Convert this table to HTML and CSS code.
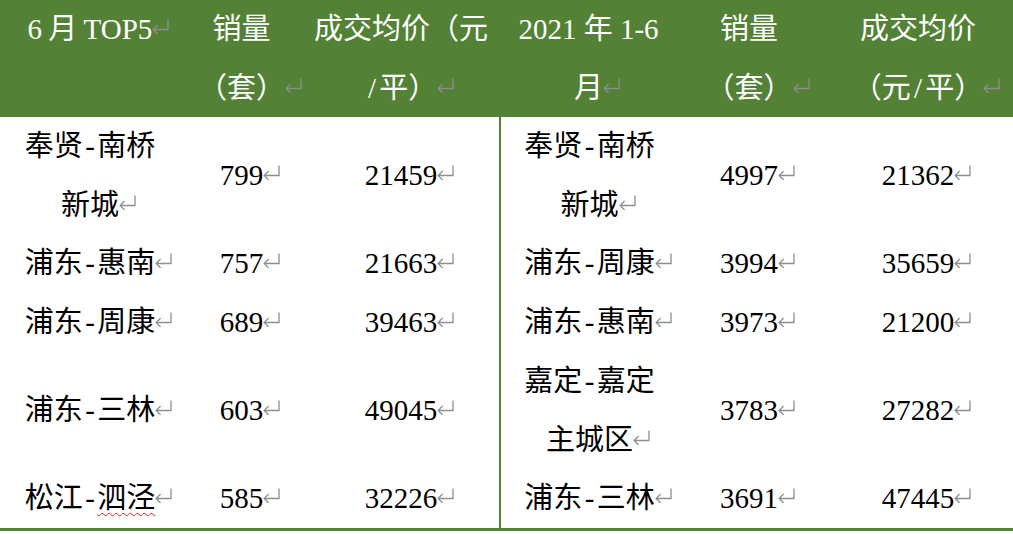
FILE: index.html
```html
<!DOCTYPE html>
<html lang="zh-CN">
<head>
<meta charset="utf-8">
<title>6月 TOP5</title>
<link rel="stylesheet" href="styles.css">
</head>
<body>
<div class="sheet">
  <div class="table">
    <div class="cell head"><p><span class="tight">6 月 TOP5</span><i class="ret"><svg viewBox="0 0 17 15" width="17" height="15"><path d="M16 0.5V10.5H1.2M5.6 6L1.2 10.5L5.6 15"/></svg></i></p></div>
    <div class="cell head"><p>销量<br>（套）<i class="ret"><svg viewBox="0 0 17 15" width="17" height="15"><path d="M16 0.5V10.5H1.2M5.6 6L1.2 10.5L5.6 15"/></svg></i></p></div>
    <div class="cell head"><p>成交均价（元<br><span class="half">/</span>平）<i class="ret"><svg viewBox="0 0 17 15" width="17" height="15"><path d="M16 0.5V10.5H1.2M5.6 6L1.2 10.5L5.6 15"/></svg></i></p></div>
    <div class="cell head"><p>2021 年 1-6<br>月<i class="ret"><svg viewBox="0 0 17 15" width="17" height="15"><path d="M16 0.5V10.5H1.2M5.6 6L1.2 10.5L5.6 15"/></svg></i></p></div>
    <div class="cell head"><p>销量<br>（套）<i class="ret"><svg viewBox="0 0 17 15" width="17" height="15"><path d="M16 0.5V10.5H1.2M5.6 6L1.2 10.5L5.6 15"/></svg></i></p></div>
    <div class="cell head"><p>成交均价<br>（元<span class="half">/</span>平）<i class="ret"><svg viewBox="0 0 17 15" width="17" height="15"><path d="M16 0.5V10.5H1.2M5.6 6L1.2 10.5L5.6 15"/></svg></i></p></div>

    <div class="cell"><p>奉贤<span class="dash">-</span>南桥<br>新城<i class="ret"><svg viewBox="0 0 17 15" width="17" height="15"><path d="M16 0.5V10.5H1.2M5.6 6L1.2 10.5L5.6 15"/></svg></i></p></div>
    <div class="cell"><p>799<i class="ret"><svg viewBox="0 0 17 15" width="17" height="15"><path d="M16 0.5V10.5H1.2M5.6 6L1.2 10.5L5.6 15"/></svg></i></p></div>
    <div class="cell"><p>21459<i class="ret"><svg viewBox="0 0 17 15" width="17" height="15"><path d="M16 0.5V10.5H1.2M5.6 6L1.2 10.5L5.6 15"/></svg></i></p></div>
    <div class="cell split"><p>奉贤<span class="dash">-</span>南桥<br>新城<i class="ret"><svg viewBox="0 0 17 15" width="17" height="15"><path d="M16 0.5V10.5H1.2M5.6 6L1.2 10.5L5.6 15"/></svg></i></p></div>
    <div class="cell"><p>4997<i class="ret"><svg viewBox="0 0 17 15" width="17" height="15"><path d="M16 0.5V10.5H1.2M5.6 6L1.2 10.5L5.6 15"/></svg></i></p></div>
    <div class="cell"><p>21362<i class="ret"><svg viewBox="0 0 17 15" width="17" height="15"><path d="M16 0.5V10.5H1.2M5.6 6L1.2 10.5L5.6 15"/></svg></i></p></div>

    <div class="cell"><p>浦东<span class="dash">-</span>惠南<i class="ret"><svg viewBox="0 0 17 15" width="17" height="15"><path d="M16 0.5V10.5H1.2M5.6 6L1.2 10.5L5.6 15"/></svg></i></p></div>
    <div class="cell"><p>757<i class="ret"><svg viewBox="0 0 17 15" width="17" height="15"><path d="M16 0.5V10.5H1.2M5.6 6L1.2 10.5L5.6 15"/></svg></i></p></div>
    <div class="cell"><p>21663<i class="ret"><svg viewBox="0 0 17 15" width="17" height="15"><path d="M16 0.5V10.5H1.2M5.6 6L1.2 10.5L5.6 15"/></svg></i></p></div>
    <div class="cell split"><p>浦东<span class="dash">-</span>周康<i class="ret"><svg viewBox="0 0 17 15" width="17" height="15"><path d="M16 0.5V10.5H1.2M5.6 6L1.2 10.5L5.6 15"/></svg></i></p></div>
    <div class="cell"><p>3994<i class="ret"><svg viewBox="0 0 17 15" width="17" height="15"><path d="M16 0.5V10.5H1.2M5.6 6L1.2 10.5L5.6 15"/></svg></i></p></div>
    <div class="cell"><p>35659<i class="ret"><svg viewBox="0 0 17 15" width="17" height="15"><path d="M16 0.5V10.5H1.2M5.6 6L1.2 10.5L5.6 15"/></svg></i></p></div>

    <div class="cell"><p>浦东<span class="dash">-</span>周康<i class="ret"><svg viewBox="0 0 17 15" width="17" height="15"><path d="M16 0.5V10.5H1.2M5.6 6L1.2 10.5L5.6 15"/></svg></i></p></div>
    <div class="cell"><p>689<i class="ret"><svg viewBox="0 0 17 15" width="17" height="15"><path d="M16 0.5V10.5H1.2M5.6 6L1.2 10.5L5.6 15"/></svg></i></p></div>
    <div class="cell"><p>39463<i class="ret"><svg viewBox="0 0 17 15" width="17" height="15"><path d="M16 0.5V10.5H1.2M5.6 6L1.2 10.5L5.6 15"/></svg></i></p></div>
    <div class="cell split"><p>浦东<span class="dash">-</span>惠南<i class="ret"><svg viewBox="0 0 17 15" width="17" height="15"><path d="M16 0.5V10.5H1.2M5.6 6L1.2 10.5L5.6 15"/></svg></i></p></div>
    <div class="cell"><p>3973<i class="ret"><svg viewBox="0 0 17 15" width="17" height="15"><path d="M16 0.5V10.5H1.2M5.6 6L1.2 10.5L5.6 15"/></svg></i></p></div>
    <div class="cell"><p>21200<i class="ret"><svg viewBox="0 0 17 15" width="17" height="15"><path d="M16 0.5V10.5H1.2M5.6 6L1.2 10.5L5.6 15"/></svg></i></p></div>

    <div class="cell"><p>浦东<span class="dash">-</span>三林<i class="ret"><svg viewBox="0 0 17 15" width="17" height="15"><path d="M16 0.5V10.5H1.2M5.6 6L1.2 10.5L5.6 15"/></svg></i></p></div>
    <div class="cell"><p>603<i class="ret"><svg viewBox="0 0 17 15" width="17" height="15"><path d="M16 0.5V10.5H1.2M5.6 6L1.2 10.5L5.6 15"/></svg></i></p></div>
    <div class="cell"><p>49045<i class="ret"><svg viewBox="0 0 17 15" width="17" height="15"><path d="M16 0.5V10.5H1.2M5.6 6L1.2 10.5L5.6 15"/></svg></i></p></div>
    <div class="cell split"><p>嘉定<span class="dash">-</span>嘉定<br>主城区<i class="ret"><svg viewBox="0 0 17 15" width="17" height="15"><path d="M16 0.5V10.5H1.2M5.6 6L1.2 10.5L5.6 15"/></svg></i></p></div>
    <div class="cell"><p>3783<i class="ret"><svg viewBox="0 0 17 15" width="17" height="15"><path d="M16 0.5V10.5H1.2M5.6 6L1.2 10.5L5.6 15"/></svg></i></p></div>
    <div class="cell"><p>27282<i class="ret"><svg viewBox="0 0 17 15" width="17" height="15"><path d="M16 0.5V10.5H1.2M5.6 6L1.2 10.5L5.6 15"/></svg></i></p></div>

    <div class="cell"><p>松江<span class="dash">-</span><span class="typo">泗泾</span><i class="ret"><svg viewBox="0 0 17 15" width="17" height="15"><path d="M16 0.5V10.5H1.2M5.6 6L1.2 10.5L5.6 15"/></svg></i></p></div>
    <div class="cell"><p>585<i class="ret"><svg viewBox="0 0 17 15" width="17" height="15"><path d="M16 0.5V10.5H1.2M5.6 6L1.2 10.5L5.6 15"/></svg></i></p></div>
    <div class="cell"><p>32226<i class="ret"><svg viewBox="0 0 17 15" width="17" height="15"><path d="M16 0.5V10.5H1.2M5.6 6L1.2 10.5L5.6 15"/></svg></i></p></div>
    <div class="cell split"><p>浦东<span class="dash">-</span>三林<i class="ret"><svg viewBox="0 0 17 15" width="17" height="15"><path d="M16 0.5V10.5H1.2M5.6 6L1.2 10.5L5.6 15"/></svg></i></p></div>
    <div class="cell"><p>3691<i class="ret"><svg viewBox="0 0 17 15" width="17" height="15"><path d="M16 0.5V10.5H1.2M5.6 6L1.2 10.5L5.6 15"/></svg></i></p></div>
    <div class="cell"><p>47445<i class="ret"><svg viewBox="0 0 17 15" width="17" height="15"><path d="M16 0.5V10.5H1.2M5.6 6L1.2 10.5L5.6 15"/></svg></i></p></div>
  </div>
</div>
</body>
</html>
```

FILE: styles.css
```css
html, body {
  margin: 0;
  padding: 0;
  background: #ffffff;
}

body {
  width: 1013px;
  height: 534px;
  overflow: hidden;
  font-family: "Liberation Serif", "Noto Sans CJK SC", serif;
  font-size: 29px;
  color: #000000;
}

.sheet {
  width: 1016px;
}

.table {
  display: grid;
  grid-template-columns: 180px 123px 196px 179px 142px 196px;
  border-bottom: 3px solid #538135;
}

.cell {
  display: flex;
  align-items: center;
  justify-content: center;
  line-height: 58.7px;
  min-height: 58.7px;
}

.cell p {
  margin: 0;
  text-align: center;
  white-space: nowrap;
}

.head {
  align-items: flex-start;
  background: #538135;
  color: #ffffff;
  line-height: 58.5px;
  height: 117px;
}

.split {
  border-left: 2px solid #538135;
}

.tight {
  word-spacing: -1px;
}

.dash,
.half {
  display: inline-block;
  width: 0.5em;
  text-align: center;
}

.ret {
  display: inline-block;
  width: 17px;
  height: 15px;
  margin-right: -17px;
  vertical-align: 5px;
  line-height: 0;
}

.ret svg {
  display: block;
  fill: none;
  stroke: #8e8e8e;
  stroke-width: 1.3;
}

.typo {
  text-decoration: underline wavy #e02020;
  text-decoration-thickness: 1px;
  text-underline-offset: 4px;
}
```
